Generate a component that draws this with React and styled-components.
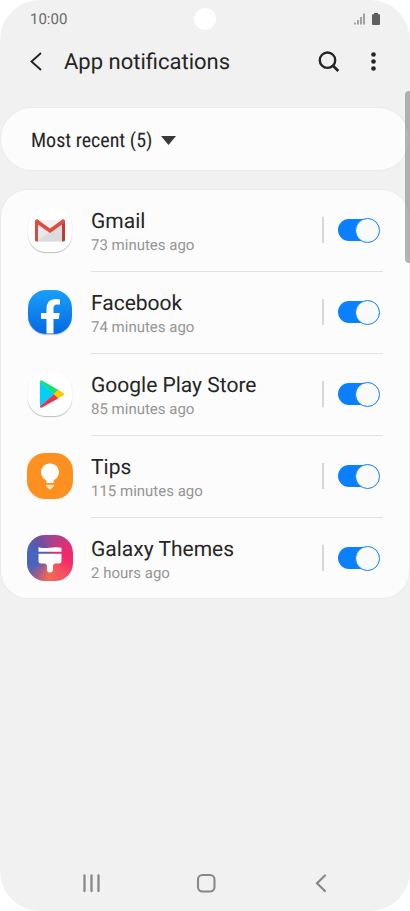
import React, { useState } from 'react';
import styled, { createGlobalStyle } from 'styled-components';

const GlobalStyle = createGlobalStyle`
  *, *::before, *::after {
    box-sizing: border-box;
  }

  body {
    margin: 0;
    background: #ffffff;
    font-family: Roboto, "Liberation Sans", sans-serif;
    color: #252525;
    text-rendering: geometricPrecision;
  }
`;

const GmailIcon = () => (
  <svg viewBox="0 0 46 46" width="46" height="46" aria-hidden="true">
    <path d="M10 15 H36 V34.500 H10 Z" fill="#e9e9e9" />
    <path d="M10 34.500 L23 24 L36 34.500 Z" fill="#dcdcdc" />
    <path d="M12 13 H34 L23 22.500 Z" fill="#f2f2f2" />
    <path d="M23 25 L36 15.500 V34 H33 Z" fill="#d3d3d3" opacity="0.6" />
    <path d="M8 14.500 Q8 12.500 10 12.500 H11 V34.500 H9.500 Q8 34.500 8 33 Z" fill="#d54b3f" />
    <path d="M38 14.500 Q38 12.500 36 12.500 H35 V34.500 H36.500 Q38 34.500 38 33 Z" fill="#c23a30" />
    <path d="M8 14.800 Q8 12.500 10.200 12.500 L11.200 12.900 L23 21.500 L34.800 12.900 L35.800 12.500 Q38 12.500 38 14.800 L37.300 16 L23 26 L8.700 16 Z" fill="#dc4e42" />
  </svg>
);

const FacebookIcon = () => (
  <svg viewBox="0 0 46 46" width="46" height="46" aria-hidden="true">
    <path
      d="M19.500 44.500 V30 H14 V24 H19.500 V20 Q19.500 10 28.500 10 Q31 10 33 10.400 V15.500 H30 Q26.500 15.500 26.500 19 V24 H32.700 L31.700 30 H26.500 V44.500 Z"
      fill="#ffffff"
    />
  </svg>
);

const PlayStoreIcon = () => (
  <svg viewBox="0 0 46 46" width="46" height="46" aria-hidden="true">
    <path d="M13 10.800 L27 23 L13 35.800 Z" fill="#00cffc" />
    <path d="M13 11 Q13 8.500 15 9.600 L31.500 18.900 L27 23.200 Z" fill="#14e07a" />
    <path d="M13 35.400 Q13 37.600 15 36.500 L31.500 27.300 L27 23 Z" fill="#ec3448" />
    <path d="M31.200 18.700 L36.400 21.800 Q37.800 23 36.400 24.300 L31.200 27.400 L26.800 23.100 Z" fill="#ffca05" />
  </svg>
);

const TipsIcon = () => (
  <svg viewBox="0 0 46 46" width="46" height="46" aria-hidden="true">
    <path
      d="M23 10.500 C17.800 10.500 14 14.500 14 19.300 C14 22.500 15.700 25.200 18.200 26.600 Q19.500 27.400 19.500 28.700 V30 H26.500 V28.700 Q26.500 27.400 27.800 26.600 C30.300 25.200 32 22.500 32 19.300 C32 14.500 28.200 10.500 23 10.500 Z"
      fill="#ffffff"
    />
    <path d="M19 31.700 H27 V33.200 L23 36.700 L19 33.200 Z" fill="#ffe7b0" />
  </svg>
);

const ThemesIcon = () => (
  <svg viewBox="0 0 46 46" width="46" height="46" aria-hidden="true">
    <path d="M11.500 12.200 Q17 13.500 22.500 12.800 Q29 11.700 34.500 12.800 V16.800 H11.500 Z" fill="#ffffff" />
    <path
      d="M11.500 18.700 H34.500 V26 Q34.500 28.500 32 28.500 H28.500 Q26.500 28.500 26 30.500 V34.500 Q26 37.500 23 37.500 Q20 37.500 20 34.500 V30.500 Q19.500 28.500 17.500 28.500 H14 Q11.500 28.500 11.500 26 Z"
      fill="#ffffff"
    />
  </svg>
);

const apps = [
  { id: 'gmail', name: 'Gmail', time: '73 minutes ago', icon: GmailIcon, tile: '#ffffff', inset: true },
  { id: 'facebook', name: 'Facebook', time: '74 minutes ago', icon: FacebookIcon, tile: 'linear-gradient(#18a0fb, #0668e4)', inset: true },
  { id: 'play', name: 'Google Play Store', time: '85 minutes ago', icon: PlayStoreIcon, tile: '#ffffff', inset: true },
  { id: 'tips', name: 'Tips', time: '115 minutes ago', icon: TipsIcon, tile: '#fe8f21' },
  {
    id: 'themes',
    name: 'Galaxy Themes',
    time: '2 hours ago',
    icon: ThemesIcon,
    tile: 'conic-gradient(#a0468f, #e52c72 60deg, #f8296b 100deg, #f5505f 140deg, #f26a55 185deg, #a95c86 215deg, #4b63bd 245deg, #4664c0 290deg, #6f509f 330deg, #a0468f)',
  },
];

const App = () => {
  const [enabled, setEnabled] = useState(() => apps.map(() => true));

  const toggle = (index) => {
    setEnabled(enabled.map((value, i) => (i === index ? !value : value)));
  };

  return (
    <>
      <GlobalStyle />
      <Phone>
        <StatusBar>
          <span>10:00</span>
          <Camera />
          <StatusIcons>
            <svg width="12" height="12" viewBox="0 0 12 12" aria-hidden="true">
              <path d="M1 9.500 V11.500 M4 7 V11.500 M7 4 V11.500 M10 0.500 V11.500" stroke="#777777" strokeWidth="1.300" />
            </svg>
            <svg width="8" height="12" viewBox="0 0 8 12" aria-hidden="true">
              <path d="M2 0 H6 V1.200 H7 Q8 1.200 8 2.200 V11 Q8 12 7 12 H1 Q0 12 0 11 V2.200 Q0 1.200 1 1.200 H2 Z" fill="#606060" />
            </svg>
          </StatusIcons>
        </StatusBar>

        <Header>
          <IconButton type="button" aria-label="Back">
            <svg width="24" height="24" viewBox="0 0 24 24" fill="none" aria-hidden="true">
              <path d="M16 3 L6.500 11.500 L16 20" stroke="#252525" strokeWidth="1.900" />
            </svg>
          </IconButton>
          <Title>App notifications</Title>
          <IconButton type="button" aria-label="Search">
            <svg width="24" height="24" viewBox="0 0 24 24" fill="none" aria-hidden="true">
              <circle cx="10.500" cy="10.200" r="7.700" stroke="#252525" strokeWidth="2.400" />
              <path d="M15.800 15.500 L21.300 21" stroke="#252525" strokeWidth="2.600" />
            </svg>
          </IconButton>
          <IconButton type="button" aria-label="More options">
            <svg width="24" height="24" viewBox="0 0 24 24" fill="#252525" aria-hidden="true">
              <circle cx="11.500" cy="4.500" r="2.300" />
              <circle cx="11.500" cy="11.500" r="2.300" />
              <circle cx="11.500" cy="18.500" r="2.300" />
            </svg>
          </IconButton>
        </Header>

        <Content>
          <SortCard>
            <SortButton type="button" aria-haspopup="listbox">
              Most recent (5)
              <svg width="15" height="9" viewBox="0 0 15 9" aria-hidden="true">
                <path d="M0 0 H15 L7.500 9 Z" fill="#3a3a3a" />
              </svg>
            </SortButton>
          </SortCard>

          <AppList>
            {apps.map((app, index) => (
              <AppRow key={app.id}>
                <IconSlot>
                  <Tile $background={app.tile} $inset={app.inset}>
                    <app.icon />
                  </Tile>
                </IconSlot>
                <RowBody>
                  <RowLabel htmlFor={app.id}>
                    <AppName>{app.name}</AppName>
                    <AppTime>{app.time}</AppTime>
                  </RowLabel>
                  <Separator />
                  <Switch
                    type="checkbox"
                    role="switch"
                    id={app.id}
                    checked={enabled[index]}
                    onChange={() => toggle(index)}
                  />
                </RowBody>
              </AppRow>
            ))}
          </AppList>
        </Content>

        <NavBar>
          <NavButton type="button" aria-label="Recent apps">
            <svg width="24" height="24" viewBox="0 0 24 24" aria-hidden="true">
              <path d="M4.500 4.500 V20 M11.500 4.500 V20 M18.500 4.500 V20" stroke="#888888" strokeWidth="2.300" strokeLinecap="round" />
            </svg>
          </NavButton>
          <NavButton type="button" aria-label="Home">
            <svg width="24" height="24" viewBox="0 0 24 24" fill="none" aria-hidden="true">
              <rect x="3" y="4" width="16.500" height="16.500" rx="4.500" stroke="#888888" strokeWidth="2.100" />
            </svg>
          </NavButton>
          <NavButton type="button" aria-label="Go back">
            <svg width="24" height="24" viewBox="0 0 24 24" fill="none" aria-hidden="true">
              <path d="M16 4.500 L8 12.200 L16 20" stroke="#888888" strokeWidth="2.200" strokeLinecap="round" />
            </svg>
          </NavButton>
        </NavBar>
        <ScrollThumb />
      </Phone>
    </>
  );
};

const Phone = styled.div`
  position: relative;
  display: flex;
  flex-direction: column;
  min-height: 100vh;
  overflow: hidden;
  background: #f1f1f1;
  border-radius: 40px;
`;

const StatusBar = styled.div`
  display: grid;
  grid-template-columns: 1fr auto 1fr;
  align-items: center;
  height: 38px;
  padding: 0 30px;
  font-size: 15px;
  color: #6a6a6a;
`;

const Camera = styled.div`
  width: 22px;
  height: 22px;
  border-radius: 50%;
  background: #ffffff;
`;

const StatusIcons = styled.div`
  display: flex;
  justify-content: flex-end;
  gap: 6px;
`;

const Header = styled.header`
  display: flex;
  align-items: center;
  height: 48px;
  padding: 0 14px;
`;

const IconButton = styled.button`
  display: grid;
  place-items: center;
  width: 45px;
  height: 44px;
  padding: 0;
  border: 0;
  background: none;
  cursor: pointer;
`;

const Title = styled.h1`
  flex: 1;
  margin: 0;
  padding: 2px 0 0 5px;
  font-size: 22px;
  font-weight: 400;
  line-height: 28px;
`;

const Content = styled.main`
  display: flex;
  flex: 1;
  flex-direction: column;
  gap: 20px;
  padding: 22px 1px;
`;

const Card = styled.div`
  background: #fcfcfc;
  box-shadow: 0 0 0 1px #ebebeb;
`;

const SortCard = styled(Card)`
  border-radius: 31px;
`;

const SortButton = styled.button`
  display: flex;
  align-items: center;
  gap: 9px;
  height: 62px;
  padding: 2px 30px 0;
  border: 0;
  background: none;
  color: #252525;
  font-family: "Roboto Condensed", Roboto, sans-serif;
  font-size: 20px;
  text-rendering: inherit;
  cursor: pointer;
`;

const AppList = styled(Card).attrs({ as: 'ul' })`
  margin: 0;
  padding: 0;
  list-style: none;
  border-radius: 27px;
`;

const AppRow = styled.li`
  display: flex;
  gap: 18px;
  height: 82px;
  padding: 0 26px;

  &:last-child {
    height: 80px;
  }
`;

const IconSlot = styled.div`
  display: grid;
  place-items: center;
  width: 46px;
  height: 80px;
`;

const Tile = styled.div`
  display: grid;
  place-content: center;
  width: ${({ $inset }) => ($inset ? '44px' : '46px')};
  height: ${({ $inset }) => ($inset ? '44px' : '46px')};
  border-radius: 18px;
  background: ${({ $background }) => $background};
  box-shadow: ${({ $inset }) => ($inset ? '0 1px 1px rgba(0, 0, 0, 0.25)' : 'none')};
`;

const RowBody = styled.div`
  display: flex;
  flex: 1;
  align-items: center;
  padding: 0 3px 1px 0;
  border-bottom: 1px solid #e2e2e2;

  ${AppRow}:last-child & {
    padding-bottom: 0;
    border-bottom: 0;
  }
`;

const RowLabel = styled.label`
  display: flex;
  flex: 1;
  flex-direction: column;
  padding-top: 4px;
`;

const AppName = styled.span`
  font-size: 21px;
  line-height: 26px;
`;

const AppTime = styled.span`
  font-size: 15px;
  line-height: 20px;
  color: #959595;
`;

const Separator = styled.span`
  width: 2px;
  height: 26px;
  margin-right: 14px;
  background: #d8d8d8;
`;

const Switch = styled.input`
  appearance: none;
  display: grid;
  align-items: center;
  width: 42px;
  height: 26px;
  margin: 0;
  cursor: pointer;

  &::before,
  &::after {
    content: '';
    grid-area: 1 / 1;
  }

  &::before {
    width: 38px;
    height: 22px;
    border-radius: 11px;
    background: #a5a5a5;
  }

  &::after {
    width: 25px;
    height: 25px;
    border: 1px solid #a5a5a5;
    border-radius: 50%;
    background: #fafafa;
  }

  &:checked::before {
    background: #0a80ff;
  }

  &:checked::after {
    justify-self: end;
    border-color: #0a80ff;
  }
`;

const NavBar = styled.nav`
  display: flex;
  justify-content: space-between;
  padding: 0 65px 4px 68px;
`;

const NavButton = styled.button`
  display: grid;
  place-items: center;
  width: 48px;
  height: 48px;
  padding: 0;
  border: 0;
  background: none;
  cursor: pointer;
`;

/* floats over the right edge of the cards */
const ScrollThumb = styled.div`
  position: absolute;
  top: 91px;
  right: 0;
  width: 5px;
  height: 172px;
  border-radius: 4px 0 0 4px;
  background: rgba(120, 120, 120, 0.55);
`;

export default App;
